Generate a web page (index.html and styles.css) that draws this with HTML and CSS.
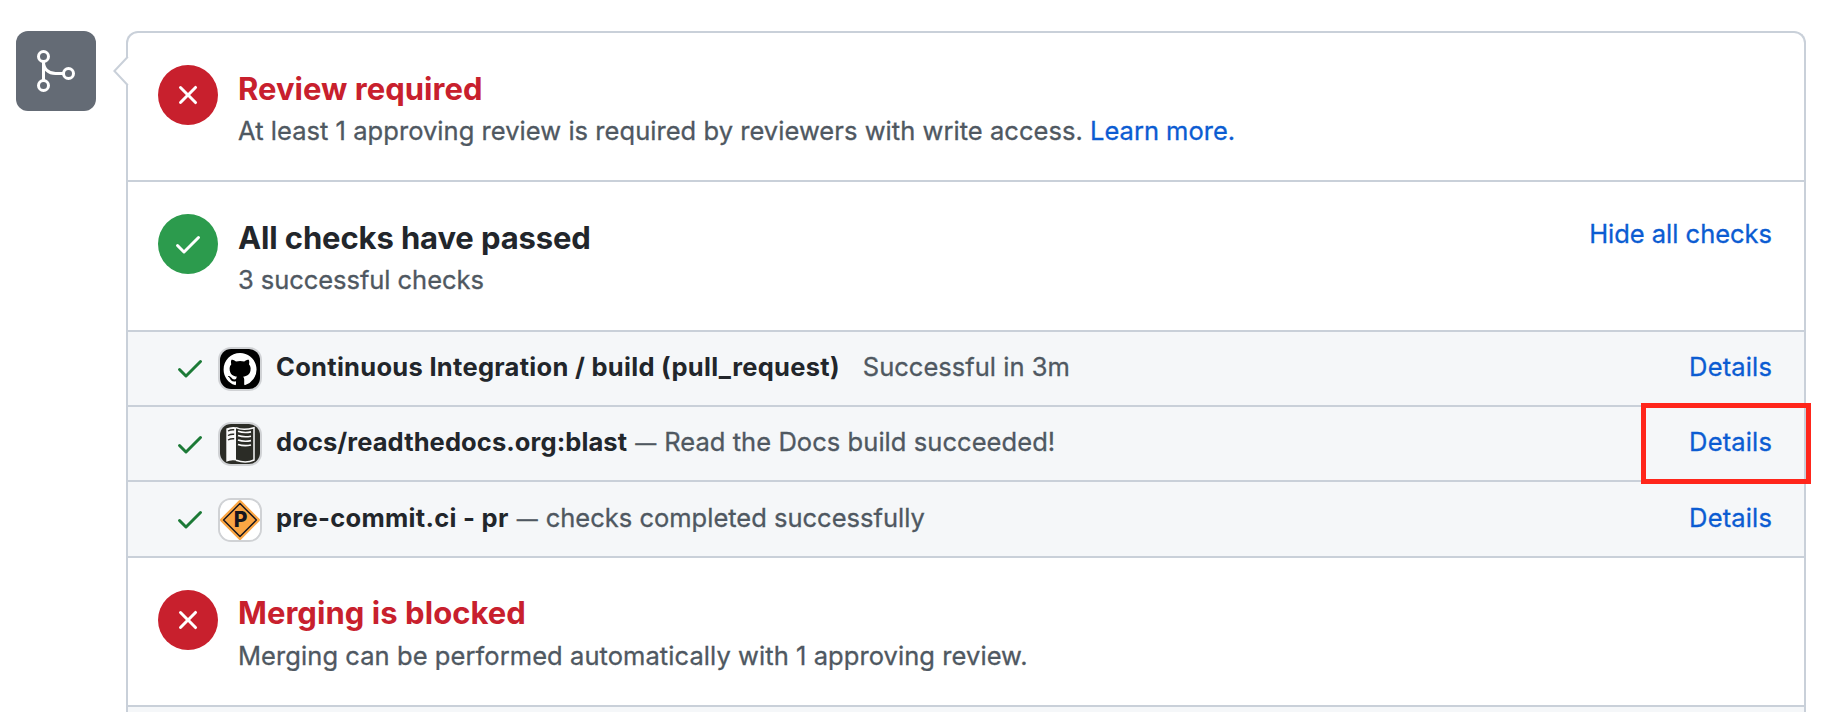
FILE: index.html
```html
<!DOCTYPE html>
<html lang="en">
<head>
<meta charset="utf-8">
<title>Merge status</title>
<link rel="stylesheet" href="styles.css">
</head>
<body>
<svg class="defs" width="0" height="0" aria-hidden="true">
  <symbol id="check" viewBox="0 0 16 16"><path d="M13.78 4.22a.75.75 0 010 1.06l-7.25 7.25a.75.75 0 01-1.06 0L2.22 9.28a.75.75 0 011.06-1.06L6 10.94l6.72-6.72a.75.75 0 011.06 0z"/></symbol>
  <symbol id="cross" viewBox="0 0 16 16"><path d="M3.72 3.72a.75.75 0 011.06 0L8 6.94l3.22-3.22a.75.75 0 111.06 1.06L9.06 8l3.22 3.22a.75.75 0 11-1.06 1.06L8 9.06l-3.22 3.22a.75.75 0 01-1.06-1.06L6.94 8 3.72 4.78a.75.75 0 010-1.06z"/></symbol>
</svg>
<main class="timeline">
  <div class="merge-badge">
    <svg width="48" height="48" viewBox="0 0 48 48" fill="none" stroke="#fff" stroke-width="3">
      <circle cx="11.5" cy="9.5" r="5"/><circle cx="11.5" cy="38.5" r="5"/><circle cx="36.5" cy="26.5" r="5"/>
      <path d="M11.5 14.5v19M11.5 15c0 7 5 11.5 12 11.5h8"/>
    </svg>
  </div>
  <section class="merge-box">
    <svg class="pointer" width="16" height="30" viewBox="0 0 16 30"><path d="M16 1 14.5 1 1.3 15 14.5 29 16 29z" fill="#fff"/><path d="M14.8 .8 1.4 15 14.8 29.2" fill="none" stroke="#c9d0d9" stroke-width="2"/></svg>

    <div class="status">
      <span class="disc disc-red"><svg class="icon"><use href="#cross"/></svg></span>
      <div class="status-text">
        <h3 class="title danger t-review">Review required</h3>
        <p class="desc"><span class="t-least">At least 1 approving review is required by reviewers with write access.</span> <a class="link t-learn">Learn more.</a></p>
      </div>
    </div>

    <div class="status">
      <span class="disc disc-green"><svg class="icon"><use href="#check"/></svg></span>
      <div class="status-text">
        <h3 class="title t-passed">All checks have passed</h3>
        <p class="desc t-three">3 successful checks</p>
      </div>
      <a class="link toggle">Hide all checks</a>
    </div>

    <div class="check">
      <svg class="icon tick"><use href="#check"/></svg>
      <svg class="avatar" viewBox="0 0 40 40"><rect width="40" height="40" fill="#000"/><path transform="translate(3.6 4) scale(2.06)" fill="#fff" d="M8 0C3.58 0 0 3.58 0 8c0 3.54 2.29 6.53 5.47 7.59.4.07.55-.17.55-.38 0-.19-.01-.82-.01-1.49-2.01.37-2.53-.49-2.69-.94-.09-.23-.48-.94-.82-1.13-.28-.15-.68-.52-.01-.53.63-.01 1.08.58 1.23.82.72 1.21 1.87.87 2.33.66.07-.52.28-.87.51-1.07-1.78-.2-3.64-.89-3.64-3.95 0-.87.31-1.59.82-2.15-.08-.2-.36-1.02.08-2.12 0 0 .67-.21 2.2.82.64-.18 1.32-.27 2-.27.68 0 1.36.09 2 .27 1.53-1.04 2.2-.82 2.2-.82.44 1.1.16 1.92.08 2.12.51.56.82 1.27.82 2.15 0 3.07-1.87 3.75-3.65 3.95.29.25.54.73.54 1.48 0 1.07-.01 1.93-.01 2.2 0 .21.15.46.55.38A8.013 8.013 0 0016 8c0-4.42-3.58-8-8-8z"/></svg>
      <strong class="name t-ci">Continuous Integration / build (pull_request)</strong>
      <span class="note note-wide">Successful in 3m</span>
      <a class="link details">Details</a>
    </div>

    <div class="check check-marked">
      <svg class="icon tick tick-low"><use href="#check"/></svg>
      <svg class="avatar" viewBox="0 0 40 40"><rect width="40" height="40" fill="#2b2c26"/>
        <path d="M6.3 4.5Q11 2.3 16 3.2V36.6Q11 35.6 6.3 37.8z" fill="#fafafa"/>
        <path d="M16 3.6C21 6 28 5.5 34 3.7V36C28 38.8 22 38.3 16 36.3" fill="none" stroke="#fafafa" stroke-width="1.5"/>
        <path d="M8 7q3-1.6 6.2-1.2M8 11.5q3-1.6 6.2-1.2M8 16q3-1.6 6.2-1.2" fill="none" stroke="#2b2c26" stroke-width="1.4"/>
        <path d="M18 7.3q6 2 13 .6M18 11.6q6 2 13 .6M18 16q6 2 13 .6M18 20.4q6 2 13 .6" fill="none" stroke="#fafafa" stroke-width="1.6"/>
      </svg>
      <strong class="name t-docs">docs/readthedocs.org:blast</strong>
      <span class="note t-read"><span class="dash">—</span>Read the Docs build succeeded!</span>
      <a class="link details">Details</a>
      <span class="highlight"></span>
    </div>

    <div class="check check-last">
      <svg class="icon tick"><use href="#check"/></svg>
      <svg class="avatar" viewBox="0 0 40 40"><rect width="40" height="40" fill="#fff"/>
        <path d="M20 1.8 38.2 20 20 38.2 1.8 20z" fill="#fba644" stroke="#fba644" stroke-width="3.4" stroke-linejoin="round"/>
        <path d="M20 3.6 36.4 20 20 36.4 3.6 20z" fill="none" stroke="#15151f" stroke-width="1.4" stroke-linejoin="round"/>
        <text class="sign" x="13.8" y="27.2">P</text>
      </svg>
      <strong class="name t-pre">pre-commit.ci - pr</strong>
      <span class="note"><span class="dash">—</span>checks completed successfully</span>
      <a class="link details">Details</a>
    </div>

    <div class="status status-blocked">
      <span class="disc disc-red"><svg class="icon"><use href="#cross"/></svg></span>
      <div class="status-text">
        <h3 class="title danger t-blocked">Merging is blocked</h3>
        <p class="desc t-merging">Merging can be performed automatically with 1 approving review.</p>
      </div>
    </div>
    <div class="footer"></div>
  </section>
</main>
</body>
</html>
```
FILE: styles.css
```css
* { box-sizing: border-box; }
html, body { height: 712px; overflow: hidden; }
body {
  margin: 0;
  background: #fff;
  color: #22262b;
  font: 400 25.5px/36px Inter, "Liberation Sans", sans-serif;
}
h3, p { margin: 0; }
.defs { position: absolute; }
.timeline { display: flex; gap: 30px; padding: 31px 36px 0 16px; }

.merge-badge {
  flex: none;
  display: flex;
  align-items: center;
  justify-content: center;
  width: 80px;
  height: 80px;
  border-radius: 12px;
  background: #646b75;
}

.merge-box {
  position: relative;
  flex: 1;
  border: 2px solid #c9d0d9;
  border-bottom: 0;
  border-radius: 12px 12px 0 0;
}
.pointer { position: absolute; left: -15px; top: 23px; }

.status {
  display: flex;
  align-items: flex-start;
  height: 150px;
  padding: 32px 32px 0 30px;
  border-top: 2px solid #c9d0d9;
}
.pointer + .status { height: 147px; border-top: 0; }
.status-blocked { height: 149px; }

.icon { flex: none; width: 32px; height: 32px; fill: currentColor; }
.disc {
  flex: none;
  display: flex;
  align-items: center;
  justify-content: center;
  width: 60px;
  height: 60px;
  margin-right: 20px;
  border-radius: 50%;
  color: #fff;
}
.disc-red { background: #c8202d; }
.disc-green { background: #2c9b4d; }

.title { font-size: 31px; line-height: 48px; font-weight: 700; white-space: nowrap; }
.status-blocked .title { margin: -1px 0 1px; }
.desc, .note { color: #4f5861; white-space: nowrap; }
.danger { color: #c8202d; }
.link { color: #0b5cd2; white-space: nowrap; }
.desc, .note, .link { -webkit-text-stroke: .3px currentColor; }
.toggle { margin: 2px 0 0 auto; letter-spacing: -.02px; }

.check {
  position: relative;
  display: flex;
  align-items: flex-start;
  height: 75px;
  padding: 17px 32px 0 46px;
  border-top: 2px solid #c9d0d9;
  background: #f5f7f9;
}
.check-marked { z-index: 1; }
.check-last { height: 76px; padding-top: 18px; }
.tick { margin: 3px 14px 0 0; color: #1c7a37; }
.tick-low { margin-top: 4px; }
.check-last .tick { margin-top: 3px; }
.avatar {
  flex: none;
  width: 40px;
  height: 40px;
  margin-right: 16px;
  border-radius: 11px;
  box-shadow: 0 0 0 2px #d0d2d5;
}
.name { font-weight: 700; white-space: nowrap; }
.note { margin-left: 8px; }
.note-wide { margin-left: 23px; letter-spacing: .02px; }
.dash { display: inline-block; width: 29px; font-size: 21px; }
.details { margin-left: auto; letter-spacing: .15px; }
.sign { font: 800 21px Inter, sans-serif; fill: #15151f; }

.highlight {
  position: absolute;
  top: -4px;
  right: -7px;
  width: 170px;
  height: 81px;
  border: 5px solid #ff261b;
}

.footer { height: 7px; border-top: 2px solid #c9d0d9; background: #f5f7f9; }

.t-review { letter-spacing: .03px; }
.t-passed { letter-spacing: -.12px; }
.t-blocked { letter-spacing: .05px; }
.t-least { letter-spacing: .045px; }
.t-learn { letter-spacing: 0; }
.t-three { letter-spacing: -.05px; }
.t-ci { letter-spacing: .29px; }
.t-docs { letter-spacing: .09px; }
.t-pre { letter-spacing: .3px; }
.t-read { letter-spacing: .06px; }
.t-merging { letter-spacing: .07px; }
```
